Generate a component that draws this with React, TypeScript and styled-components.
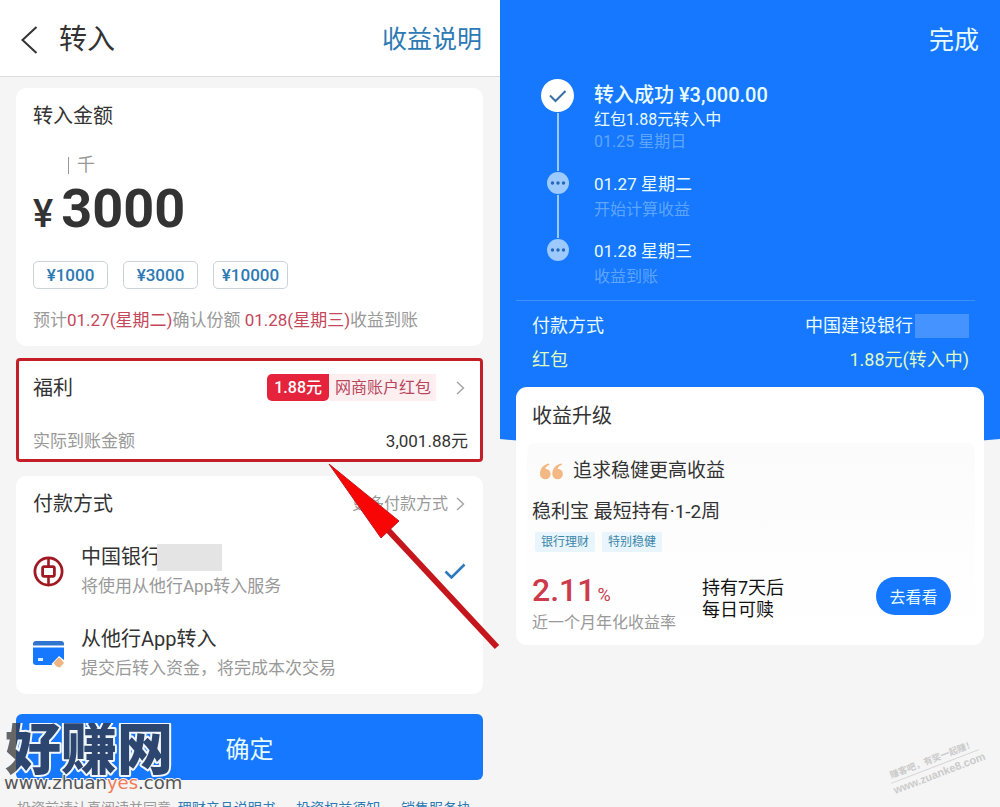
import React from "react";
import styled, { createGlobalStyle } from "styled-components";

const BLUE = "#1677ff";

const GlobalStyle = createGlobalStyle`
  * { box-sizing: border-box; }
  body {
    margin: 0;
    background: #f5f5f5;
    color: #333;
    font-family: Roboto, "Noto Sans CJK SC", sans-serif;
    font-size: 17px;
    line-height: 24px;
  }
  h1, h2, h3, p, ul, ol, dl, dd, dt { margin: 0; padding: 0; font-weight: 400; }
  ul, ol { list-style: none; }
  a { text-decoration: none; color: inherit; }
  button { font-family: inherit; padding: 0; border: 0; background: none; color: inherit; cursor: pointer; }
`;

const Page = styled.div`
  display: grid;
  grid-template-columns: 1fr 1fr;
  grid-template-rows: 100%;
  height: 100vh;
  overflow: hidden;
`;

const Screen = styled.main`
  position: relative;
  min-width: 0;
`;

/* ---------- transfer-in screen ---------- */

const TopBar = styled.header`
  display: flex;
  align-items: center;
  height: 77px;
  padding: 3px 18px 0 20px;
  background: #fff;
  border-bottom: 1px solid #dcdcdc;
`;

const BackButton = styled.button`
  display: flex;
  margin-right: 20px;
`;

const Title = styled.h1`
  flex: 1;
  font-size: 28px;
  line-height: 36px;
`;

const HelpLink = styled.a`
  color: #2d79b4;
  font-size: 25px;
  line-height: 36px;
`;

const Body = styled.div`
  display: flex;
  flex-direction: column;
  padding: 11px 17px 0 16px;
`;

const Card = styled.section`
  padding: 16px 17px 14px;
  border-radius: 10px;
  background: #fff;
`;

const CardTitle = styled.h2`
  font-size: 20px;
  line-height: 24px;
`;

const UnitHint = styled.p`
  display: flex;
  align-items: center;
  gap: 8px;
  margin: 25px 0 0 35px;
  color: #999;
  font-size: 18px;

  &::before {
    content: "";
    width: 1px;
    height: 17px;
    background: #999;
  }
`;

const Amount = styled.p`
  display: flex;
  align-items: baseline;
  gap: 8px;
  height: 56px;
  margin-top: 4px;
  font-size: 54px;
  font-weight: 700;
  line-height: 56px;
`;

const Currency = styled.span`
  font-size: 38px;
  font-weight: 500;
`;

const Chips = styled.div`
  display: flex;
  gap: 15px;
  margin-top: 24px;
`;

const Chip = styled.button`
  width: 75px;
  height: 28px;
  border: 1px solid #ccd2d8;
  border-radius: 5px;
  color: #2d79b4;
  font-size: 17px;
  font-weight: 500;
`;

const Note = styled.p`
  margin-top: 19px;
  color: #999;
  white-space: nowrap;
`;

const Accent = styled.span`
  color: #c4475a;
`;

const BenefitCard = styled.section`
  display: flex;
  flex-direction: column;
  gap: 28px;
  margin-top: 12px;
  padding: 13px 12px 6px 14px;
  border: 3px solid #c41f26;
  border-radius: 4px;
  background: #fff;
`;

const Row = styled.div`
  display: flex;
  align-items: center;
  justify-content: space-between;
`;

const Coupon = styled.a`
  display: flex;
  align-items: center;
  padding-right: 3px;
  font-size: 16px;
  line-height: 27px;
`;

const CouponValue = styled.span`
  padding: 0 7px;
  border-radius: 5px 0 5px 5px;
  background: #e5233c;
  color: #fff;
  font-weight: 500;
`;

const CouponName = styled.span`
  margin-right: 20px;
  padding: 0 5px 0 6px;
  background: #fdeef0;
  color: #b8475c;
`;

const Muted = styled.span`
  color: #999;
`;

const PayCard = styled(Card)`
  margin-top: 14px;
`;

const MoreLink = styled.a`
  display: flex;
  align-items: center;
  gap: 8px;
  padding-right: 1px;
  color: #999;
  font-size: 16px;
`;

const PayList = styled.ul`
  display: flex;
  flex-direction: column;
  gap: 28px;
  margin-top: 28px;
`;

const PayItem = styled.li`
  display: flex;
  align-items: center;
  gap: 17px;
`;

const PayText = styled.div`
  flex: 1;
`;

const PayName = styled.h3`
  display: flex;
  font-size: 20px;
  line-height: 27px;
`;

const Redacted = styled.span<{ $w: number; $h: number; $tone: string }>`
  width: ${(p) => p.$w}px;
  height: ${(p) => p.$h}px;
  margin-left: -4px;
  background: ${(p) => p.$tone};
`;

const PayDesc = styled.p`
  margin-top: 3px;
  color: #999;
`;

const Submit = styled.button`
  height: 66px;
  margin-top: 20px;
  border-radius: 6px;
  background: ${BLUE};
  color: #e6fbff;
  font-size: 24px;
`;

const Agreement = styled.p`
  display: flex;
  justify-content: space-between;
  margin-top: 18px;
  padding: 0 12px 0 1px;
  color: #999;
  font-size: 14px;
  line-height: 20px;
  white-space: nowrap;
`;

const DocLink = styled.a`
  color: #2d79b4;
`;

const Pointer = styled.svg`
  position: absolute;
  left: 326px;
  top: 460px;
`;

const SiteMark = styled.svg`
  position: absolute;
  left: 0;
  bottom: 12px;
`;

/* ---------- result screen ---------- */

const Hero = styled.section`
  height: 439px;
  background: ${BLUE};
  color: #e8fcff;
`;

const HeroBar = styled.header`
  display: flex;
  justify-content: flex-end;
  padding: 23px 21px 20px;
`;

const DoneButton = styled.button`
  font-size: 25px;
  line-height: 36px;
`;

const Steps = styled.ol`
  padding-left: 41px;
`;

const Step = styled.li<{ $h: number }>`
  display: flex;
  gap: 20px;
  min-height: ${(p) => p.$h}px;
`;

const Rail = styled.div`
  display: flex;
  flex-direction: column;
  align-items: center;
  gap: 1px;
  width: 33px;
`;

const RailLine = styled.span`
  flex: 1;
  width: 2px;
  margin-bottom: 1px;
  background: #9cc9ff;
`;

const StepTitle = styled.h2`
  margin-top: 2px;
  font-size: 20px;
  font-weight: 500;
  line-height: 28px;
`;

const StepLine = styled.p`
  font-size: 16px;
  line-height: 22px;
`;

const StepDate = styled.h3`
  margin-bottom: 3px;
  font-size: 17px;
  line-height: 24px;
`;

const Faint = styled(StepLine)`
  color: #5ea6fb;
`;

const Details = styled.dl`
  display: flex;
  flex-direction: column;
  gap: 10px;
  margin: 12px 25px 0 16px;
  padding: 13px 6px 0 16px;
  border-top: 1px solid #3d8ffa;
  font-size: 18px;
`;

const Detail = styled.div<{ $warm?: boolean }>`
  display: flex;
  justify-content: space-between;
  color: ${(p) => (p.$warm ? "#dffac4" : "inherit")};
`;

const DetailValue = styled.dd`
  display: flex;
  gap: 6px;
`;

const Curve = styled.svg`
  display: block;
  width: 100%;
  height: 12px;
`;

const Upgrade = styled.section`
  position: relative;
  margin: -64px 16px 0;
  padding: 17px 9px 10px 11px;
  border-radius: 11px;
  background: #fff;
`;

const UpgradeTitle = styled(CardTitle)`
  padding-left: 5px;
`;

const Product = styled.div`
  margin-top: 15px;
  padding: 16px 24px 0 5px;
  border-radius: 8px;
  background: linear-gradient(#fbfbfb, #fff);
`;

const Quote = styled.p`
  display: flex;
  align-items: center;
  gap: 10px;
  padding-left: 8px;
  font-size: 19px;
`;

const ProductName = styled.h3`
  margin-top: 17px;
  font-size: 19px;
`;

const Tags = styled.ul`
  display: flex;
  gap: 7px;
  margin: 8px 0 0 3px;
`;

const Tag = styled.li`
  padding: 0 6px;
  border-radius: 2px;
  background: #e8f5fc;
  color: #3c86a8;
  font-size: 12px;
  line-height: 20px;
`;

const Stats = styled.div`
  display: flex;
  align-items: flex-start;
  margin-top: 22px;
`;

const Rate = styled.div`
  width: 170px;
`;

const RateValue = styled.p`
  display: flex;
  align-items: baseline;
  gap: 2px;
  height: 32px;
  color: #cc3a4c;
  font-size: 32px;
  font-weight: 500;
  line-height: 32px;
`;

const Percent = styled.span`
  font-size: 18px;
  font-weight: 400;
`;

const RateLabel = styled.p`
  margin-top: 5px;
  color: #999;
  font-size: 16px;
`;

const Term = styled.p`
  flex: 1;
  margin-top: 3px;
  color: #111;
  font-size: 18px;
  line-height: 22px;
`;

const ViewButton = styled.button`
  width: 75px;
  height: 38px;
  margin-top: 3px;
  border-radius: 19px;
  background: ${BLUE};
  color: #e6fbff;
  font-size: 16px;
`;

const ForumMark = styled.div`
  position: absolute;
  right: 18px;
  bottom: 26px;
  width: 94px;
  transform: rotate(-21deg);
  color: #cbcbcb;
  font-size: 9px;
  font-weight: 700;
  line-height: 14px;
  text-align: center;
  white-space: nowrap;
`;

const ForumUrl = styled.div`
  border-top: 1px solid #d4d4d4;
  font-family: "Liberation Sans", sans-serif;
  font-size: 11px;
`;

const Chevron = () => (
  <svg width="9" height="14" viewBox="0 0 9 14" fill="none" stroke="#a3a3a3" strokeWidth="1.4" aria-hidden="true">
    <path d="M1 1l6.5 6L1 13" />
  </svg>
);

const BankLogo = () => (
  <svg width="31" height="31" viewBox="0 0 31 31" fill="none" stroke="#a01822" aria-hidden="true">
    <circle cx="15.5" cy="15.5" r="13.6" strokeWidth="2.8" />
    <rect x="9.6" y="10.6" width="11.8" height="9.8" rx="1.6" strokeWidth="2.8" />
    <path d="M15.5 2v8M15.5 21v8" strokeWidth="2.6" />
  </svg>
);

const CardLogo = () => (
  <svg width="31" height="31" viewBox="0 0 31 31" aria-hidden="true">
    <path d="M0 7.5V6a3 3 0 0 1 3-3h25a3 3 0 0 1 3 3v1.5z" fill="#2e75cf" />
    <path d="M0 9.5h31V24a3 3 0 0 1-3 3H3a3 3 0 0 1-3-3z" fill={BLUE} />
    <rect x="5" y="20" width="5" height="3" fill="#d9f0ff" />
    <path d="M18.500 26l7.500-8 5 4v9h-9z" fill="#fff" />
    <path d="M20.500 25l5-5.500 2 1 3.500 4.500-4 4.500-3.500-1z" fill="#efb684" />
  </svg>
);

const PendingDot = () => (
  <svg width="22" height="22" viewBox="0 0 22 22" aria-hidden="true">
    <circle cx="11" cy="11" r="11" fill="#9ccaff" />
    <g fill="#2766b8">
      <circle cx="5.500" cy="11" r="1.700" />
      <circle cx="11" cy="11" r="1.700" />
      <circle cx="16.500" cy="11" r="1.700" />
    </g>
  </svg>
);

export default function App() {
  return (
    <>
      <GlobalStyle />
      <Page>
        <Screen>
          <TopBar>
            <BackButton aria-label="返回">
              <svg width="19" height="28" viewBox="0 0 19 28" fill="none" stroke="#333" strokeWidth="2">
                <path d="M16.500 1L2.500 14l14 13" />
              </svg>
            </BackButton>
            <Title>转入</Title>
            <HelpLink href="#help">收益说明</HelpLink>
          </TopBar>
          <Body>
            <Card>
              <CardTitle>转入金额</CardTitle>
              <UnitHint>千</UnitHint>
              <Amount>
                <Currency>¥</Currency>3000
              </Amount>
              <Chips>
                <Chip>¥1000</Chip>
                <Chip>¥3000</Chip>
                <Chip>¥10000</Chip>
              </Chips>
              <Note>
                预计<Accent>01.27(星期二)</Accent>确认份额 <Accent>01.28(星期三)</Accent>收益到账
              </Note>
            </Card>

            <BenefitCard>
              <Row>
                <CardTitle>福利</CardTitle>
                <Coupon href="#coupon">
                  <CouponValue>1.88元</CouponValue>
                  <CouponName>网商账户红包</CouponName>
                  <Chevron />
                </Coupon>
              </Row>
              <Row>
                <Muted>实际到账金额</Muted>
                <span>3,001.88元</span>
              </Row>
            </BenefitCard>

            <PayCard>
              <Row>
                <CardTitle>付款方式</CardTitle>
                <MoreLink href="#more">
                  更多付款方式
                  <Chevron />
                </MoreLink>
              </Row>
              <PayList>
                <PayItem>
                  <BankLogo />
                  <PayText>
                    <PayName>
                      中国银行
                      <Redacted $w={65} $h={27} $tone="#e4e4e4" />
                    </PayName>
                    <PayDesc>将使用从他行App转入服务</PayDesc>
                  </PayText>
                  <svg width="22" height="17" viewBox="0 0 22 17" fill="none" stroke="#2d79bd" strokeWidth="2.600" aria-label="已选择">
                    <path d="M1.500 8.500l6 6L20.500 1.500" />
                  </svg>
                </PayItem>
                <PayItem>
                  <CardLogo />
                  <PayText>
                    <PayName>从他行App转入</PayName>
                    <PayDesc>提交后转入资金，将完成本次交易</PayDesc>
                  </PayText>
                </PayItem>
              </PayList>
            </PayCard>

            <Submit>确定</Submit>
            <Agreement>
              <span>投资前请认真阅读并同意</span>
              <DocLink href="#doc">理财产品说明书、</DocLink>
              <DocLink href="#rights">投资权益须知、</DocLink>
              <DocLink href="#service">销售服务协</DocLink>
            </Agreement>
          </Body>

          <Pointer width="174" height="192" viewBox="0 0 174 192" aria-hidden="true">
            <path d="M62 70L171 187" stroke="#c4161c" strokeWidth="6" />
            <path d="M3 4L73 61 55 78z" fill="#f80606" stroke="#c4161c" strokeWidth="1" />
          </Pointer>

          <SiteMark width="200" height="72" viewBox="0 0 200 72">
            <defs>
              <linearGradient id="ink" gradientUnits="userSpaceOnUse" x1="0" y1="0" x2="200" y2="0">
                <stop offset="0.080" stopColor="#666" />
                <stop offset="0.080" stopColor="#2c4670" />
              </linearGradient>
            </defs>
            <text
              x="5"
              y="46"
              fontFamily="'Noto Sans CJK SC', sans-serif"
              fontSize="56"
              fontWeight="900"
              fill="url(#ink)"
              stroke="#f1f6fb"
              strokeWidth="4"
              strokeLinejoin="round"
              paintOrder="stroke"
            >
              好赚网
            </text>
            <text
              x="4"
              y="66"
              fontFamily="'DejaVu Sans', sans-serif"
              fontSize="18"
              fill="#555"
              stroke="#f5f5f5"
              strokeWidth="2"
              paintOrder="stroke"
            >
              www.zhuan<tspan fill="#f27a55">yes</tspan>.com
            </text>
          </SiteMark>
        </Screen>

        <Screen as="section">
          <Hero>
            <HeroBar>
              <DoneButton>完成</DoneButton>
            </HeroBar>
            <Steps>
              <Step $h={93}>
                <Rail>
                  <svg width="33" height="33" viewBox="0 0 33 33" aria-hidden="true">
                    <circle cx="16.500" cy="16.500" r="16.500" fill="#fff" />
                    <path d="M9 16.500l5.500 5.500L24.500 12" fill="none" stroke="#3a6ea5" strokeWidth="2" />
                  </svg>
                  <RailLine />
                </Rail>
                <div>
                  <StepTitle>转入成功 ¥3,000.00</StepTitle>
                  <StepLine>红包1.88元转入中</StepLine>
                  <Faint>01.25 星期日</Faint>
                </div>
              </Step>
              <Step $h={67}>
                <Rail>
                  <PendingDot />
                  <RailLine />
                </Rail>
                <div>
                  <StepDate>01.27 星期二</StepDate>
                  <Faint>开始计算收益</Faint>
                </div>
              </Step>
              <Step $h={48}>
                <Rail>
                  <PendingDot />
                </Rail>
                <div>
                  <StepDate>01.28 星期三</StepDate>
                  <Faint>收益到账</Faint>
                </div>
              </Step>
            </Steps>
            <Details>
              <Detail>
                <dt>付款方式</dt>
                <DetailValue>
                  中国建设银行
                  <Redacted $w={54} $h={24} $tone="#4593ff" />
                </DetailValue>
              </Detail>
              <Detail $warm>
                <dt>红包</dt>
                <DetailValue>1.88元(转入中)</DetailValue>
              </Detail>
            </Details>
          </Hero>
          <Curve viewBox="0 0 100 12" preserveAspectRatio="none" aria-hidden="true">
            <path d="M0 0Q50 24 100 0z" fill={BLUE} />
          </Curve>

          <Upgrade>
            <UpgradeTitle>收益升级</UpgradeTitle>
            <Product>
              <Quote>
                <svg width="23" height="17" viewBox="0 0 23 17" fill="#f3b883" aria-hidden="true">
                  <path d="M9 0.500C3.500 1.500 0 5.500 0 11a5.300 5.300 0 1 0 5.300-5.300C6 3.800 7.300 2.600 9.500 2z" />
                  <path d="M21.500 0.500C16 1.500 12.300 5.500 12.300 11a5.300 5.300 0 1 0 5.300-5.300C18.300 3.800 19.600 2.600 22 2z" />
                </svg>
                追求稳健更高收益
              </Quote>
              <ProductName>稳利宝 最短持有·1-2周</ProductName>
              <Tags>
                <Tag>银行理财</Tag>
                <Tag>特别稳健</Tag>
              </Tags>
              <Stats>
                <Rate>
                  <RateValue>
                    2.11<Percent>%</Percent>
                  </RateValue>
                  <RateLabel>近一个月年化收益率</RateLabel>
                </Rate>
                <Term>
                  持有7天后
                  <br />
                  每日可赎
                </Term>
                <ViewButton>去看看</ViewButton>
              </Stats>
            </Product>
          </Upgrade>

          <ForumMark>
            赚客吧，有奖一起赚！
            <ForumUrl>www.zuanke8.com</ForumUrl>
          </ForumMark>
        </Screen>
      </Page>
    </>
  );
}
